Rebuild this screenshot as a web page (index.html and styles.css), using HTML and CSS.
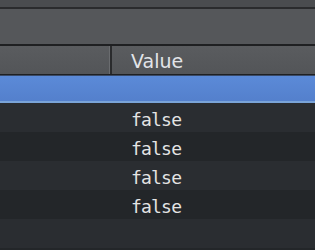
FILE: index.html
```html
<!DOCTYPE html>
<html lang="en">
<head>
  <meta charset="UTF-8" />
  <title>Properties</title>
  <link rel="stylesheet" href="styles.css">
</head>
<body>
  <div class="toolbar"></div>
  <div class="panel"></div>

  <div class="table">
    <div class="head">
      <div class="cell name"></div>
      <div class="cell value">Value</div>
    </div>
    <div class="row selected">
      <div class="cell name"></div>
      <div class="cell value"></div>
    </div>
    <div class="row">
      <div class="cell name"></div>
      <div class="cell value mono">false</div>
    </div>
    <div class="row alt">
      <div class="cell name"></div>
      <div class="cell value mono">false</div>
    </div>
    <div class="row">
      <div class="cell name"></div>
      <div class="cell value mono">false</div>
    </div>
    <div class="row alt">
      <div class="cell name"></div>
      <div class="cell value mono">false</div>
    </div>
    <div class="row"></div>
    <div class="row alt"></div>
  </div>
</body>
</html>
```

FILE: styles.css
```css
/* --- base --- */
*, *::before, *::after { box-sizing: border-box; margin: 0; padding: 0; }
body {
  font-family: "DejaVu Sans", "Liberation Sans", sans-serif;
  background: #232629; color: #dedede; overflow: hidden;
}

/* --- top strips --- */
.toolbar { height: 9px; background: #4a4c4f; border-bottom: 2px solid #2a2b2d; }
.panel { height: 37px; background: #55575a; border-bottom: 2px solid #1f2022; }

/* --- table --- */
.table { display: flex; flex-direction: column; }
.head, .row { display: flex; }
.cell { display: flex; align-items: center; }
.cell.name { width: 112px; }
.cell.value { flex: 1; padding-left: 19px; }

.head {
  height: 29px;
  background: linear-gradient(#5a5c5f, #535558);
  border-bottom: 1px solid #1f2022;
}
.head .cell { height: 100%; }
.head .cell.name { border-right: 2px solid #2a2b2d; box-shadow: inset -1px 0 0 #6a6c6f; }
.head .cell.value { font-size: 19px; color: #e2e4e8; padding-top: 2px; }

.row { height: 29px; background: #2a2d31; }
.row.alt { background: #232629; }
.row.selected {
  height: 28px;
  background: linear-gradient(#5b8ad8, #5480cc);
  border-top: 1px solid #3a4a66;
  border-bottom: 2px solid #7aa4d8;
  box-shadow: 0 1px 0 #1c1e21;
}
.mono {
  font-family: "DejaVu Sans Mono", "Liberation Mono", monospace;
  font-size: 18px; letter-spacing: -0.8px; color: #e4e4e4; padding-top: 4px;
}
```
